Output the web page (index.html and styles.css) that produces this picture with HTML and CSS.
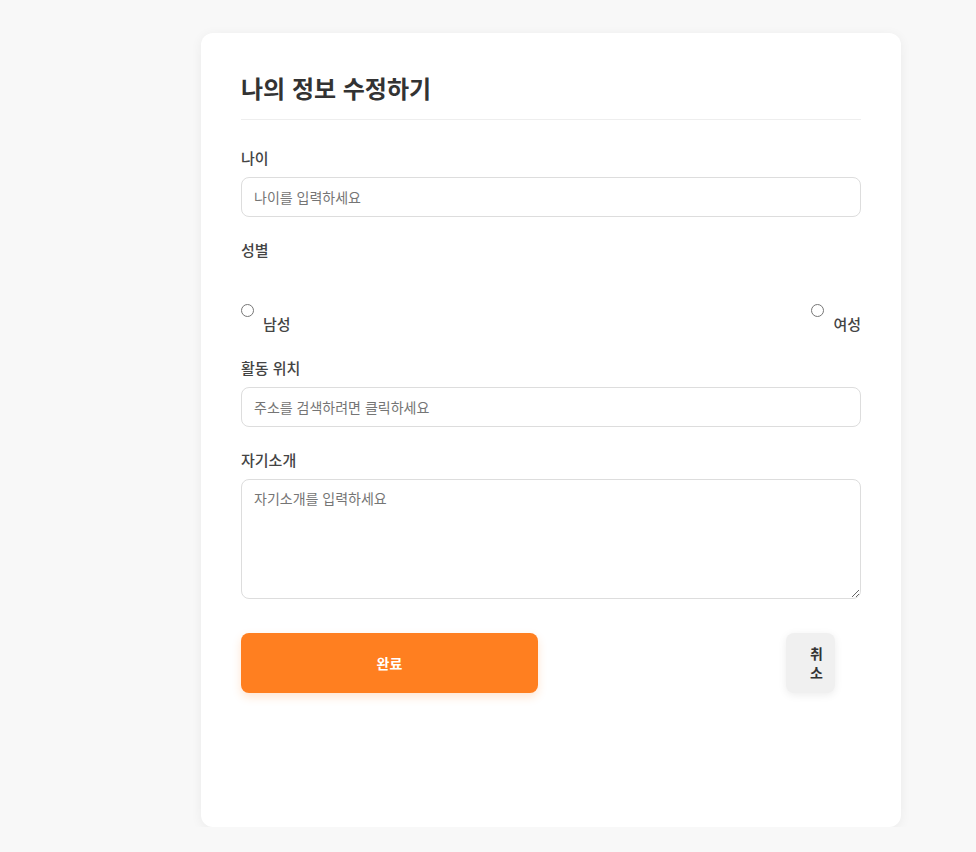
FILE: index.html
```html
<!DOCTYPE html>
<html lang="ko">
<head>
<meta charset="utf-8">
<title>나의 정보 수정하기</title>
<link rel="stylesheet" href="styles.css">
</head>
<body>
<div class="page">
  <div class="card">
    <h1 class="title">나의 정보 수정하기</h1>
    <div class="form-group">
      <label class="label">나이</label>
      <input class="input" type="text" placeholder="나이를 입력하세요">
    </div>
    <div class="form-group">
      <label class="label">성별</label>
      <div class="gender-options">
        <label class="option"><input class="radio" type="radio" name="g"><span class="option-text">남성</span></label>
        <label class="option"><input class="radio" type="radio" name="g"><span class="option-text">여성</span></label>
      </div>
    </div>
    <div class="form-group">
      <label class="label">활동 위치</label>
      <input class="input" type="text" placeholder="주소를 검색하려면 클릭하세요">
    </div>
    <div class="form-group">
      <label class="label">자기소개</label>
      <textarea class="textarea" placeholder="자기소개를 입력하세요"></textarea>
    </div>
    <div class="buttons">
      <button class="btn-primary">완료</button>
      <button class="btn-cancel">취소</button>
    </div>
  </div>
</div>
</body>
</html>
```
FILE: styles.css
```css
* { box-sizing: border-box; }
html, body {
  margin: 0;
  padding: 0;
  background: #f8f8f8;
  font-family: "Noto Sans CJK KR", "Noto Sans", sans-serif;
  color: #333;
}
.page {
  padding: 33px 0 0 201px;
}
.card {
  width: 700px;
  height: 794px;
  background: #fff;
  border-radius: 12px;
  box-shadow: 0 2px 12px rgba(0, 0, 0, 0.06);
  padding: 40px;
}
.title {
  margin: 0 0 27px;
  font-size: 24px;
  line-height: 30px;
  font-weight: 700;
  color: #333;
  padding-bottom: 16px;
  border-bottom: 1px solid #eee;
}
.form-group {
  margin-bottom: 22px;
}
.label {
  display: block;
  font-size: 15px;
  line-height: 22px;
  font-weight: 500;
  color: #444;
  margin-bottom: 8px;
}
.input {
  display: block;
  width: 100%;
  height: 40px;
  border: 1px solid #ddd;
  border-radius: 8px;
  padding: 0 12px;
  font-family: inherit;
  font-size: 14px;
  color: #333;
  background: #fff;
}
.input::placeholder, .textarea::placeholder {
  color: #757575;
}
.textarea {
  display: block;
  width: 100%;
  height: 120px;
  border: 1px solid #ddd;
  border-radius: 8px;
  padding: 8px 12px;
  font-family: inherit;
  font-size: 14px;
  line-height: 20px;
  resize: vertical;
  background: #fff;
}
.gender-options {
  display: flex;
  justify-content: space-between;
  padding-top: 31px;
}
.option {
  display: flex;
  align-items: flex-start;
  font-size: 15px;
  font-weight: 500;
  color: #444;
}
.radio {
  width: 13px;
  height: 13px;
  margin: 4px 9px 0 0;
}
.option-text {
  padding-top: 13px;
  line-height: 22px;
}
.buttons {
  display: flex;
  justify-content: space-between;
  align-items: flex-start;
  margin-top: 34px;
}
.btn-primary {
  width: 297px;
  height: 60px;
  border: none;
  border-radius: 8px;
  background: #ff7f20;
  color: #fff;
  font-family: inherit;
  font-size: 14px;
  font-weight: 700;
  box-shadow: 0 4px 10px rgba(255, 127, 32, 0.2);
}
.btn-cancel {
  width: 49px;
  height: 60px;
  margin-right: 26px;
  border: none;
  border-radius: 8px;
  background: #f0f0f0;
  color: #333;
  font-family: inherit;
  font-size: 14px;
  font-weight: 700;
  line-height: 19px;
  padding: 0 24px;
  box-shadow: 0 2px 8px rgba(0, 0, 0, 0.08);
}
```
